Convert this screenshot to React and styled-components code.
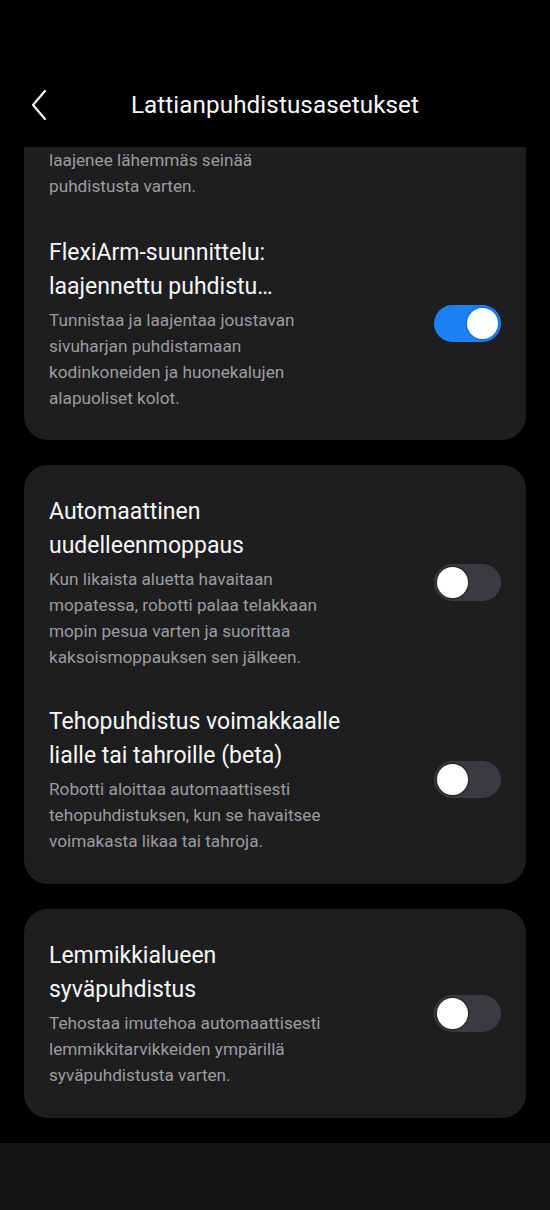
import React from "react";
import styled, { createGlobalStyle } from "styled-components";

const Global = createGlobalStyle`
  html, body { margin: 0; padding: 0; background: #000; }
  body { font-family: Roboto, "Noto Sans", "Liberation Sans", sans-serif; -webkit-font-smoothing: antialiased; }
  * { box-sizing: border-box; }
`;

const Page = styled.div`
  width: 550px;
  height: 1210px;
  background: #000;
  display: flex;
  flex-direction: column;
  overflow: hidden;
`;

const Header = styled.header`
  height: 147px;
  flex: none;
  padding-top: 63px;
  display: grid;
  grid-template-columns: 1fr auto 1fr;
  align-items: center;
`;

const BackButton = styled.button`
  justify-self: start;
  margin-left: 26px;
  background: none;
  border: none;
  padding: 0;
  width: 26px;
  height: 36px;
  display: flex;
  align-items: center;
  justify-content: center;
  cursor: pointer;
`;

const Title = styled.h1`
  margin: 0;
  font-size: 24.2px;
  font-weight: 400;
  color: #fafafa;
  letter-spacing: 0.1px;
`;

const Scroll = styled.main`
  flex: 1;
  overflow: hidden;
  padding: 0 24px;
  display: flex;
  flex-direction: column;
  gap: 25px;
`;

const Card = styled.section`
  background: #1e1e20;
  border-radius: ${(p) => (p.$clipped ? "0 0 24px 24px" : "24px")};
  padding: ${(p) => (p.$clipped ? "0 25px 29px 25px" : "30px 25px 30px 25px")};
  display: flex;
  flex-direction: column;
  gap: ${(p) => p.$gap || 35}px;
`;

const Row = styled.div`
  display: flex;
  align-items: center;
  justify-content: space-between;
`;

const TextCol = styled.div`
  width: 330px;
  display: flex;
  flex-direction: column;
`;

const ItemTitle = styled.div`
  font-size: 23px;
  line-height: 34px;
  color: #f7f7f7;
  margin-bottom: 3px;
`;

const Desc = styled.div`
  font-size: 17.2px;
  line-height: 26px;
  color: #9c9c9e;
`;

const Track = styled.button`
  flex: none;
  width: 67px;
  height: 37px;
  border-radius: 19px;
  border: none;
  padding: 0 3px;
  background: ${(p) => (p.$on ? "#1b82f5" : "#3b3b3f")};
  display: flex;
  align-items: center;
  justify-content: ${(p) => (p.$on ? "flex-end" : "flex-start")};
  cursor: pointer;
`;

const Knob = styled.span`
  width: 31px;
  height: 31px;
  border-radius: 50%;
  background: #fff;
  box-shadow: 0 0 0 1.5px ${(p) => (p.$on ? "#1671d8" : "#2a2a2d")};
`;

const BottomBar = styled.div`
  height: 67px;
  flex: none;
  background: #131313;
`;

function Toggle({ on }) {
  return (
    <Track $on={on} aria-pressed={on}>
      <Knob $on={on} />
    </Track>
  );
}

function Setting({ title, desc, on }) {
  return (
    <Row>
      <TextCol>
        {title && <ItemTitle>{title}</ItemTitle>}
        <Desc>{desc}</Desc>
      </TextCol>
      {on !== undefined && <Toggle on={on} />}
    </Row>
  );
}

const br = (lines) =>
  lines.map((l, i) => (
    <React.Fragment key={i}>
      {l}
      {i < lines.length - 1 && <br />}
    </React.Fragment>
  ));

export default function App() {
  return (
    <Page>
      <Global />
      <Header>
        <BackButton aria-label="Takaisin">
          <svg width="18" height="32" viewBox="0 0 18 32" fill="none">
            <path d="M15 2 L3 16 L15 30" stroke="#f2f2f2" strokeWidth="2.2" strokeLinecap="round" strokeLinejoin="round" />
          </svg>
        </BackButton>
        <Title>Lattianpuhdistusasetukset</Title>
        <span />
      </Header>
      <Scroll>
        <Card $clipped $gap={37}>
          <Setting desc={br(["laajenee lähemmäs seinää", "puhdistusta varten."])} />
          <Setting
            title={br(["FlexiArm-suunnittelu:", "laajennettu puhdistu…"])}
            desc={br([
              "Tunnistaa ja laajentaa joustavan",
              "sivuharjan puhdistamaan",
              "kodinkoneiden ja huonekalujen",
              "alapuoliset kolot.",
            ])}
            on={true}
          />
        </Card>
        <Card>
          <Setting
            title={br(["Automaattinen", "uudelleenmoppaus"])}
            desc={br([
              "Kun likaista aluetta havaitaan",
              "mopatessa, robotti palaa telakkaan",
              "mopin pesua varten ja suorittaa",
              "kaksoismoppauksen sen jälkeen.",
            ])}
            on={false}
          />
          <Setting
            title={br(["Tehopuhdistus voimakkaalle", "lialle tai tahroille (beta)"])}
            desc={br([
              "Robotti aloittaa automaattisesti",
              "tehopuhdistuksen, kun se havaitsee",
              "voimakasta likaa tai tahroja.",
            ])}
            on={false}
          />
        </Card>
        <Card>
          <Setting
            title={br(["Lemmikkialueen", "syväpuhdistus"])}
            desc={br([
              "Tehostaa imutehoa automaattisesti",
              "lemmikkitarvikkeiden ympärillä",
              "syväpuhdistusta varten.",
            ])}
            on={false}
          />
        </Card>
      </Scroll>
      <BottomBar />
    </Page>
  );
}
